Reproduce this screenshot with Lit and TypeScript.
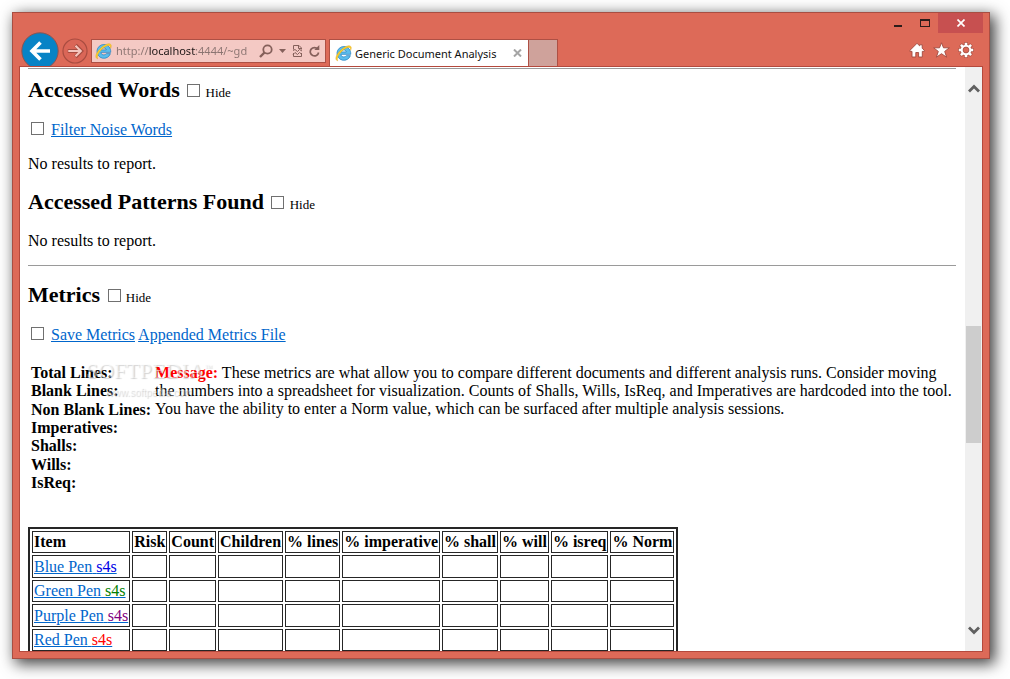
import { LitElement, html, css, svg } from "lit";
import { customElement, property, state } from "lit/decorators.js";

interface Pen {
  name: string;
  tone: string;
}

const PENS: Pen[] = [
  { name: "Blue Pen", tone: "blue" },
  { name: "Green Pen", tone: "green" },
  { name: "Purple Pen", tone: "purple" },
  { name: "Red Pen", tone: "red" },
];

const COLUMNS = [
  "Risk",
  "Count",
  "Children",
  "% lines",
  "% imperative",
  "% shall",
  "% will",
  "% isreq",
  "% Norm",
];

const TOTALS = [
  "Total Lines:",
  "Blank Lines:",
  "Non Blank Lines:",
  "Imperatives:",
  "Shalls:",
  "Wills:",
  "IsReq:",
];

const browserLogo = html`<svg class="logo" width="17" height="17" viewBox="0 0 16 16" aria-hidden="true">
  <path d="M8.300 1.400a6.500 6.500 0 1 0 6.200 8.600h-3.900c-.5.8-1.300 1.200-2.300 1.200-1.500 0-2.600-.9-2.700-2.400h9.200c.3-4.100-2.500-7.400-6.500-7.400zM5.700 6.500c.3-1.200 1.200-1.900 2.500-1.900s2.200.7 2.400 1.900z" fill="#5cbdec" stroke="#2583c2" stroke-width=".7"/>
  <path d="M2.600 14.900C-.6 14.200.8 9.500 4.400 5.800 8 2 13-.6 14.800 1.300c.8.8.6 2.200-.1 3.700.1-1.200 0-2-.6-2.400-1.500-1-5.300.8-8.200 3.900-3.100 3.200-4.500 6.500-3.300 8.400z" fill="#fcd02c" stroke="#e0a414" stroke-width=".4"/>
</svg>`;

@customElement("browser-toolbar")
export class BrowserToolbar extends LitElement {
  static styles = css`
    :host {
      display: flex;
      height: 53px;
      flex: none;
      font-family: "Noto Sans", "Open Sans", sans-serif;
      font-size: 11px;
    }
    button {
      appearance: none;
      border: 0;
      padding: 0;
      margin: 0;
      background: none;
      display: flex;
      align-items: center;
      justify-content: center;
      flex: none;
    }
    svg {
      display: block;
      flex: none;
    }
    .nav {
      display: flex;
      align-items: flex-start;
      padding-top: 19px;
      padding-left: 8px;
      overflow: hidden;
      flex: none;
    }
    .forward {
      margin: 6px 3px 0 3px;
    }
    .address {
      display: flex;
      align-items: center;
      box-sizing: border-box;
      width: 235px;
      height: 24px;
      margin-top: 26px;
      padding-left: 3px;
      border: 1px solid #ae5044;
      background: #f4c9c4;
      flex: 0 1 auto;
    }
    .url {
      flex: 1;
      min-width: 0;
      width: 0;
      margin: 0 0 0 4px;
      padding: 0;
      border: 0;
      outline: 0;
      font: inherit;
      line-height: 20px;
      color: transparent;
      background: linear-gradient(
        90deg,
        #8b7471 33px,
        #1d1615 33px,
        #1d1615 80px,
        #8b7471 80px
      );
      background-clip: text;
      -webkit-background-clip: text;
    }
    .tools {
      display: flex;
      gap: 6px;
      padding: 0 5px 0 2px;
    }
    .tabs {
      display: flex;
      align-items: stretch;
      margin: 26px 0 0 3px;
      flex: none;
    }
    .tab {
      display: flex;
      align-items: center;
      box-sizing: border-box;
      width: 200px;
      padding: 0 6px 0 5px;
      border: 1px solid #ae5044;
      border-bottom: 0;
      background: #fff;
      color: #111;
    }
    .label {
      flex: 1;
      margin-left: 3px;
      white-space: nowrap;
    }
    .new-tab {
      box-sizing: border-box;
      width: 29px;
      border: 1px solid #ae5044;
      border-width: 1px 1px 0 0;
      background: #cfa29b;
    }
    .end {
      display: flex;
      flex-direction: column;
      align-items: flex-end;
      margin-left: auto;
      flex: none;
    }
    .caption {
      display: flex;
      height: 20px;
      padding-right: 6px;
    }
    .caption button {
      width: 27px;
    }
    .caption .close {
      width: 45px;
      background: #c75050;
    }
    .shortcuts {
      display: flex;
      gap: 8px;
      padding: 9px 15px 0 0;
    }
  `;

  render() {
    return html`
      <div class="nav">
        <button aria-label="Back">
          <svg width="38" height="38" viewBox="0 0 38 38">
            <circle cx="19" cy="19" r="18.200" fill="#0783c6" stroke="#8d5350" stroke-width="1" />
            <path d="M29 19H11.500M19.500 10.500L11 19l8.500 8.500" fill="none" stroke="#fff" stroke-width="3.600" />
          </svg>
        </button>
        <button class="forward" aria-label="Forward">
          <svg width="26" height="26" viewBox="0 0 27 27">
            <circle cx="13.500" cy="13.500" r="12.500" fill="#da6657" stroke="#a84c40" stroke-width="1.200" />
            <path d="M6 13.500h13.500M14 7.500l6 6-6 6" fill="none" stroke="#a84c40" stroke-width="4" />
            <path d="M6.500 13.500H19M14 8l5.500 5.500L14 19" fill="none" stroke="#f4c5bd" stroke-width="2.200" />
          </svg>
        </button>
      </div>
      <div class="address">
        ${browserLogo}
        <input class="url" type="text" aria-label="Address" value="http://localhost:4444/~gd" />
        <div class="tools">
          <button aria-label="Search">
            <svg width="14" height="14" viewBox="0 0 14 14">
              <circle cx="8.500" cy="5.500" r="4.200" fill="none" stroke="#85605b" stroke-width="1.800" />
              <path d="M5.500 8.500L1 13" stroke="#85605b" stroke-width="2.400" />
            </svg>
          </button>
          <button aria-label="Show address bar autocomplete">
            <svg width="7" height="4" viewBox="0 0 7 4"><path d="M0 0h7L3.500 4z" fill="#85605b" /></svg>
          </button>
          <button aria-label="Compatibility view">
            <svg width="11" height="14" viewBox="0 0 11 14">
              <path d="M1.500 5.500V1.500h5.500l2.500 2.500v1.500M1.500 9v3.500h8V9M6.500 1.500V4.500h3" fill="none" stroke="#85605b" stroke-width="1" />
              <path d="M1 6.500l2-1L5.500 7.500 7.500 5.500l2.500 1.500M1 10.500l2-2 2.500 2 2-2 2.500 2" fill="none" stroke="#85605b" stroke-width="1" />
            </svg>
          </button>
          <button aria-label="Refresh">
            <svg width="11" height="12" viewBox="0 0 11 12">
              <path d="M8.800 4.200A4.200 4.200 0 1 0 9.600 7.500" fill="none" stroke="#85605b" stroke-width="1.700" />
              <path d="M10.300 0v5H5.300z" fill="#85605b" />
            </svg>
          </button>
        </div>
      </div>
      <div class="tabs">
        <div class="tab">
          ${browserLogo}
          <span class="label">Generic Document Analysis</span>
          <button aria-label="Close tab">
            <svg width="9" height="8" viewBox="0 0 9 8">
              <path d="M1 .5l7 7M8 .5l-7 7" stroke="#a5a5a5" stroke-width="2" />
            </svg>
          </button>
        </div>
        <button class="new-tab" aria-label="New tab"></button>
      </div>
      <div class="end">
        <div class="caption">
          <button aria-label="Minimize">
            <svg width="8" height="10" viewBox="0 0 8 10"><path d="M0 7h8v2H0z" fill="#2b1c1a" /></svg>
          </button>
          <button aria-label="Maximize">
            <svg width="10" height="8" viewBox="0 0 10 8">
              <path d="M0 0h10v8H0zM1 2v5h8V2z" fill="#2b1c1a" fill-rule="evenodd" />
            </svg>
          </button>
          <button class="close" aria-label="Close">
            <svg width="8" height="8" viewBox="0 0 8 8">
              <path d="M.5.5l7 7M7.500.5l-7 7" stroke="#fff" stroke-width="1.700" />
            </svg>
          </button>
        </div>
        <div class="shortcuts">
          <button aria-label="Home">
            <svg width="16" height="16" viewBox="0 0 16 16">
              <path d="M8 1.300L10.600 3.800V2.800h2.600v3.400L15.300 8.400v1H13.300V15H9.600v-4.500H6.800V15H3V9.400H.9v-1z" fill="#fff" stroke="#a04a3e" stroke-width=".9" />
            </svg>
          </button>
          <button aria-label="Favorites">
            <svg width="17" height="16" viewBox="0 0 17 16">
              <path d="M8.500.8l2 5h5.800l-4.600 3.600 1.900 5.800-5.100-3.500-5.100 3.500 1.900-5.800L.7 5.800h5.800z" fill="#fff" stroke="#a04a3e" stroke-width=".9" />
            </svg>
          </button>
          <button aria-label="Tools">
            <svg width="16" height="16" viewBox="0 0 16 16">
              ${[0, 45, 90, 135].map(
                (a) => svg`<path d="M8 .3v15.400" transform="rotate(${a} 8 8)" stroke="#a04a3e" stroke-width="3.800" />`
              )}
              <circle cx="8" cy="8" r="5.900" fill="#a04a3e" />
              ${[0, 45, 90, 135].map(
                (a) => svg`<path d="M8 .8v14.400" transform="rotate(${a} 8 8)" stroke="#fff" stroke-width="2.600" />`
              )}
              <circle cx="8" cy="8" r="5.300" fill="#fff" />
              <circle cx="8" cy="8" r="2.900" fill="#dc6857" stroke="#a04a3e" stroke-width=".8" />
            </svg>
          </button>
        </div>
      </div>
    `;
  }
}

@customElement("hide-heading")
export class HideHeading extends LitElement {
  @property() heading = "";
  @state() private hide = false;

  static styles = css`
    :host {
      display: block;
    }
    h2 {
      margin: 0;
      font-size: 22px;
      line-height: 28px;
      white-space: nowrap;
    }
    label {
      font-size: 13px;
      font-weight: normal;
    }
    input {
      appearance: none;
      box-sizing: border-box;
      width: 13px;
      height: 13px;
      margin: 0 2px 0 2px;
      border: 1px solid #707070;
      background: #fff;
      vertical-align: baseline;
    }
  `;

  private toggle(e: Event) {
    this.hide = (e.target as HTMLInputElement).checked;
  }

  render() {
    return html`<h2>
      ${this.heading}
      <label><input type="checkbox" .checked=${this.hide} @change=${this.toggle} /> Hide</label>
    </h2>`;
  }
}

@customElement("app-root")
export class AppRoot extends LitElement {
  static styles = css`
    :host {
      display: block;
      box-sizing: border-box;
      height: 100vh;
      padding: 12px 20px 20px 12px;
      background: #fff;
      overflow: hidden;
    }
    .window {
      display: flex;
      flex-direction: column;
      box-sizing: border-box;
      height: 100%;
      border: 1px solid #a84e42;
      background: #dd6a58;
      box-shadow: 4px 4px 14px 1px rgba(0, 0, 0, 0.75);
    }
    .client {
      display: flex;
      flex: 1;
      min-height: 0;
      margin: 0 6px 6px;
      border: 1px solid #b4493d;
      background: #fff;
    }
    .page {
      position: relative;
      flex: 1;
      min-width: 0;
      padding: 1px 9px 0 8px;
      overflow: hidden;
      font-family: "Liberation Serif", "Times New Roman", serif;
      font-size: 16px;
      line-height: 18px;
      color: #000;
    }
    hr {
      height: 1px;
      margin: 0;
      border: 0;
      background: #9a9a9a;
    }
    a {
      color: #0066cc;
    }
    p {
      margin: 0;
    }
    .top-rule {
      margin: 0 0 7px;
    }
    .option {
      margin-top: 14px;
      padding-left: 3px;
    }
    .option input {
      appearance: none;
      box-sizing: border-box;
      width: 13px;
      height: 13px;
      margin: 0 3px 0 0;
      border: 1px solid #707070;
      background: #fff;
      vertical-align: baseline;
    }
    .empty {
      margin-top: 16px;
    }
    .patterns {
      margin-top: 15px;
    }
    .patterns + .empty {
      margin-top: 13px;
    }
    .rule {
      margin: 15px 0;
    }
    .totals {
      margin-top: 20px;
      border-spacing: 0;
    }
    .totals td,
    .totals th {
      padding: 0 1px 0 3px;
      vertical-align: top;
      text-align: left;
    }
    .totals th {
      white-space: nowrap;
    }
    .totals ul {
      display: flex;
      flex-direction: column;
      justify-content: space-between;
      min-height: 128px;
      margin: 0;
      padding: 0;
      list-style: none;
    }
    .message {
      color: #f00;
    }
    .items {
      margin-top: 35px;
      border: 2px solid #262626;
      border-spacing: 2px;
    }
    .items th,
    .items td {
      box-sizing: border-box;
      height: 22px;
      padding: 1px;
      border: 1px solid #262626;
      white-space: nowrap;
      text-align: center;
    }
    .items tr:nth-child(odd) td {
      height: 23px;
    }
    .items th:first-child,
    .items td:first-child {
      text-align: left;
    }
    .blue {
      color: #0000e6;
    }
    .green {
      color: #008000;
    }
    .purple {
      color: #800080;
    }
    .red {
      color: #f00;
    }
    .watermark {
      position: absolute;
      left: 66px;
      top: 291px;
      display: flex;
      flex-direction: column;
      color: rgba(255, 255, 255, 0.5);
      text-shadow: 1px 1px 1px rgba(0, 0, 0, 0.18);
      pointer-events: none;
    }
    .brand {
      font-size: 22px;
      line-height: 26px;
    }
    .brand sup {
      font-size: 8px;
      line-height: 8px;
    }
    .site {
      padding-left: 20px;
      font-family: "Liberation Sans", Arial, sans-serif;
      font-size: 10px;
      line-height: 18px;
    }
    .scrollbar {
      display: flex;
      flex-direction: column;
      align-items: center;
      width: 17px;
      background: #f0f0f0;
      flex: none;
    }
    .scrollbar button {
      display: flex;
      align-items: center;
      justify-content: center;
      width: 17px;
      height: 42px;
      padding: 0;
      border: 0;
      background: none;
    }
    .track {
      display: flex;
      flex-direction: column;
      flex: 1;
      width: 15px;
    }
    .before {
      flex: 217;
    }
    .thumb {
      flex: 117;
      background: #cdcdcd;
    }
    .after {
      flex: 166;
    }
  `;

  render() {
    return html`
      <div class="window">
        <browser-toolbar></browser-toolbar>
        <div class="client">
          <main class="page">
            <hr class="top-rule" />
            <hide-heading heading="Accessed Words"></hide-heading>
            <p class="option">
              <input id="filter" type="checkbox" aria-labelledby="filter-text" />
              <a id="filter-text" href="#filter">Filter Noise Words</a>
            </p>
            <p class="empty">No results to report.</p>
            <hide-heading class="patterns" heading="Accessed Patterns Found"></hide-heading>
            <p class="empty">No results to report.</p>
            <hr class="rule" />
            <hide-heading heading="Metrics"></hide-heading>
            <p class="option">
              <input id="save" type="checkbox" aria-labelledby="save-text" />
              <a id="save-text" href="#save">Save Metrics</a>
              <a href="#appended">Appended Metrics File</a>
            </p>
            <table class="totals">
              <tr>
                <th>
                  <ul>
                    ${TOTALS.map((t) => html`<li>${t}</li>`)}
                  </ul>
                </th>
                <td>
                  <b class="message">Message:</b> These metrics are what allow you to compare different documents and
                  different analysis runs. Consider moving the numbers into a spreadsheet for visualization. Counts of
                  Shalls, Wills, IsReq, and Imperatives are hardcoded into the tool. You have the ability to enter a
                  Norm value, which can be surfaced after multiple analysis sessions.
                </td>
              </tr>
            </table>
            <table class="items">
              <thead>
                <tr>
                  <th>Item</th>
                  ${COLUMNS.map((c) => html`<th>${c}</th>`)}
                </tr>
              </thead>
              <tbody>
                ${PENS.map(
                  (pen) => html`<tr>
                    <td><a href="#pen">${pen.name} <span class=${pen.tone}>s4s</span></a></td>
                    ${COLUMNS.map(() => html`<td></td>`)}
                  </tr>`
                )}
              </tbody>
            </table>
            <div class="watermark" aria-hidden="true">
              <span class="brand">SOFTPEDIA<sup>™</sup></span>
              <span class="site">www.softpedia.com</span>
            </div>
          </main>
          <div class="scrollbar">
            <button aria-label="Scroll up">
              <svg width="12" height="9" viewBox="0 0 12 9">
                <path d="M1 7.500l5-5 5 5" fill="none" stroke="#606060" stroke-width="2.800" />
              </svg>
            </button>
            <div class="track">
              <div class="before"></div>
              <div class="thumb"></div>
              <div class="after"></div>
            </div>
            <button aria-label="Scroll down">
              <svg width="12" height="9" viewBox="0 0 12 9">
                <path d="M1 1.500l5 5 5-5" fill="none" stroke="#606060" stroke-width="2.800" />
              </svg>
            </button>
          </div>
        </div>
      </div>
    `;
  }
}
